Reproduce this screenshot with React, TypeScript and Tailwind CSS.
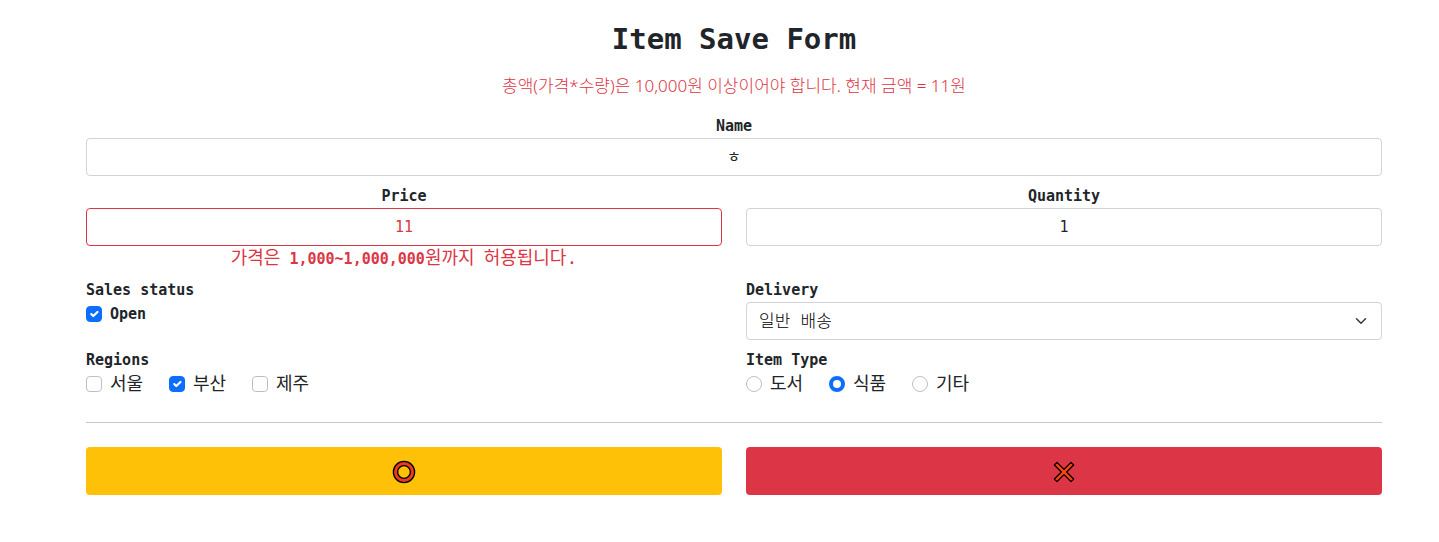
import { useState } from 'react';
import type { ReactNode } from 'react';

const REGIONS = [
  { code: 'SEOUL', name: '서울' },
  { code: 'BUSAN', name: '부산' },
  { code: 'JEJU', name: '제주' },
];

const ITEM_TYPES = [
  { code: 'BOOK', name: '도서' },
  { code: 'FOOD', name: '식품' },
  { code: 'ETC', name: '기타' },
];

const DELIVERY_CODES = [
  { code: 'FAST', name: '빠른 배송' },
  { code: 'NORMAL', name: '일반 배송' },
  { code: 'SLOW', name: '느린 배송' },
];

const inputClass =
  'block h-[38px] w-full rounded border bg-white px-3 text-center text-[15px] font-normal outline-none';

interface CheckboxProps {
  id: string;
  checked: boolean;
  onChange: () => void;
}

function Checkbox({ id, checked, onChange }: CheckboxProps) {
  return (
    <span className="grid size-4 shrink-0">
      <input
        id={id}
        type="checkbox"
        checked={checked}
        onChange={onChange}
        className="peer col-start-1 row-start-1 size-4 appearance-none rounded border border-[#bfbfbf] bg-white checked:border-[#0d6efd] checked:bg-[#0d6efd]"
      />
      <svg
        viewBox="0 0 20 20"
        className="pointer-events-none invisible col-start-1 row-start-1 size-4 p-px peer-checked:visible"
        fill="none"
        stroke="#fff"
        strokeWidth="3"
        strokeLinecap="round"
        strokeLinejoin="round"
      >
        <path d="m6 10 3 3 6-6" />
      </svg>
    </span>
  );
}

// Hangul is set slightly larger than the monospace latin text next to it
function Hangul({ children }: { children: ReactNode }) {
  return <span className="text-[18px] font-normal">{children}</span>;
}

export default function App() {
  const [name, setName] = useState('ㅎ');
  const [price, setPrice] = useState('11');
  const [quantity, setQuantity] = useState('1');
  const [open, setOpen] = useState(true);
  const [regions, setRegions] = useState<string[]>(['BUSAN']);
  const [itemType, setItemType] = useState('FOOD');
  const [delivery, setDelivery] = useState('NORMAL');

  const toggleRegion = (code: string) => {
    setRegions((prev) =>
      prev.includes(code) ? prev.filter((r) => r !== code) : [...prev, code]
    );
  };

  return (
    <main className="bg-white pt-5 pr-[57px] pb-10 pl-[86px] font-['DejaVu_Sans_Mono','Noto_Sans_CJK_KR',monospace] text-[15px] leading-6 font-bold text-[#212529]">
      <h1 className="text-center text-[29px] leading-[38px]">Item Save Form</h1>

      <form onSubmit={(e) => e.preventDefault()}>
        <p className="mt-4 text-center font-['Noto_Sans','Noto_Sans_CJK_KR',sans-serif] text-[17px] leading-6 font-light text-[#dc3545]">
          총액(가격*수량)은 10,000원 이상이어야 합니다. 현재 금액 = 11원
        </p>

        <div className="mt-4 text-center">
          <label htmlFor="itemName" className="block">Name</label>
          <input
            id="itemName"
            type="text"
            value={name}
            onChange={(e) => setName(e.target.value)}
            className={`${inputClass} border-[#ced4da] pb-1`}
          />
        </div>

        <div className="mt-2 grid grid-cols-2 gap-x-6 gap-y-2">
          <div className="text-center">
            <label htmlFor="price" className="block">Price</label>
            <input
              id="price"
              type="text"
              value={price}
              onChange={(e) => setPrice(e.target.value)}
              className={`${inputClass} border-[#dc3545] text-[#dc3545]`}
            />
            <p className="h-6 text-[#dc3545]">
              <Hangul>가격은</Hangul> 1,000~1,000,000<Hangul>원까지</Hangul> <Hangul>허용됩니다.</Hangul>
            </p>
          </div>
          <div className="text-center">
            <label htmlFor="quantity" className="block">Quantity</label>
            <input
              id="quantity"
              type="text"
              value={quantity}
              onChange={(e) => setQuantity(e.target.value)}
              className={`${inputClass} border-[#ced4da]`}
            />
          </div>

          <div>
            <div>Sales status</div>
            <div className="flex h-6 items-center gap-2">
              <Checkbox id="open" checked={open} onChange={() => setOpen(!open)} />
              <label htmlFor="open">Open</label>
            </div>
          </div>
          <div>
            <label htmlFor="deliveryCode" className="block">Delivery</label>
            <div className="grid items-center">
              <select
                id="deliveryCode"
                value={delivery}
                onChange={(e) => setDelivery(e.target.value)}
                className="col-start-1 row-start-1 h-[38px] w-full appearance-none rounded border border-[#ced4da] bg-white pr-9 pl-3 text-[17px] font-light text-black outline-none"
              >
                {DELIVERY_CODES.map((d) => (
                  <option key={d.code} value={d.code}>{d.name}</option>
                ))}
              </select>
              <svg
                viewBox="0 0 16 16"
                className="pointer-events-none col-start-1 row-start-1 mr-[13px] h-3 w-4 justify-self-end"
                fill="none"
                stroke="#343a40"
                strokeWidth="2"
                strokeLinecap="round"
                strokeLinejoin="round"
              >
                <path d="m2 5 6 6 6-6" />
              </svg>
            </div>
          </div>

          <fieldset>
            <legend>Regions</legend>
            <div className="flex h-6 gap-6">
              {REGIONS.map((r) => (
                <div key={r.code} className="flex w-[59px] items-center gap-2">
                  <Checkbox
                    id={`region-${r.code}`}
                    checked={regions.includes(r.code)}
                    onChange={() => toggleRegion(r.code)}
                  />
                  <label htmlFor={`region-${r.code}`} className="whitespace-nowrap">
                    <Hangul>{r.name}</Hangul>
                  </label>
                </div>
              ))}
            </div>
          </fieldset>
          <fieldset>
            <legend>Item Type</legend>
            <div className="flex h-6 gap-6">
              {ITEM_TYPES.map((t) => (
                <div key={t.code} className="flex w-[59px] items-center gap-2">
                  <input
                    id={`type-${t.code}`}
                    type="radio"
                    name="itemType"
                    checked={itemType === t.code}
                    onChange={() => setItemType(t.code)}
                    className="size-4 shrink-0 appearance-none rounded-full border border-[#bfbfbf] bg-white checked:border-4 checked:border-[#0d6efd]"
                  />
                  <label htmlFor={`type-${t.code}`} className="whitespace-nowrap">
                    <Hangul>{t.name}</Hangul>
                  </label>
                </div>
              ))}
            </div>
          </fieldset>
        </div>

        <hr className="mt-[26px] mb-6 border-[#c8c9ca]" />

        <div className="grid grid-cols-2 gap-6">
          <button
            type="submit"
            aria-label="Save"
            className="flex h-12 items-center justify-center rounded bg-[#ffc107] pt-px"
          >
            <svg viewBox="0 0 24 24" className="size-6" fill="none">
              <circle cx="12" cy="12" r="8.5" stroke="#000" strokeWidth="5.6" />
              <circle cx="12" cy="12" r="8.5" stroke="#ea3b1c" strokeWidth="3" />
            </svg>
          </button>
          <button
            type="button"
            aria-label="Cancel"
            className="flex h-12 items-center justify-center rounded bg-[#dc3545] pt-px"
          >
            <svg viewBox="0 0 24 24" className="size-6" fill="none">
              <path
                d="M5 2.4 12 9.4 19 2.4 21.6 5 14.6 12 21.6 19 19 21.6 12 14.6 5 21.6 2.4 19 9.4 12 2.4 5Z"
                fill="#f8450f"
                stroke="#000"
                strokeWidth="1.3"
                strokeLinejoin="round"
              />
            </svg>
          </button>
        </div>
      </form>
    </main>
  );
}
